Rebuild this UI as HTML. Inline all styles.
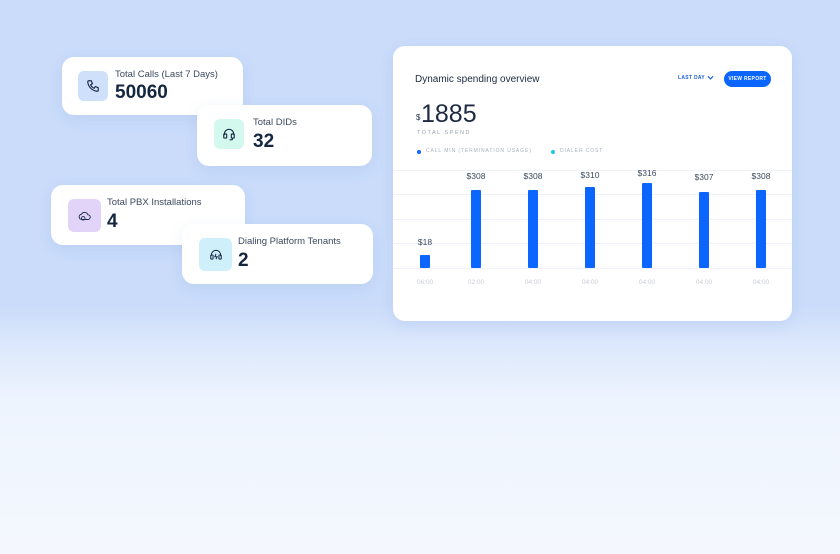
<!DOCTYPE html><html><head><style>
body{margin:0;width:840px;height:554px;overflow:hidden;font-family:"Liberation Sans",sans-serif;background:linear-gradient(#cadcfa 0,#cadcfa 305px,#dce8fc 345px,#eef4fe 400px,#f4f8fe 554px);position:relative}
.c{position:absolute;background:#fff;border-radius:12px;box-shadow:0 4px 14px rgba(80,120,200,.12)}
.ic{position:absolute;width:30px;height:30px;border-radius:6px;display:flex;align-items:center;justify-content:center}
.t{position:absolute;font-size:9.5px;color:#3b4a5e}
.v{position:absolute;font-size:19px;font-weight:bold;color:#142640}
.bar{position:absolute;width:10px;background:#0a66ff;border-radius:1px}
.lb{position:absolute;font-size:8.5px;color:#3b4a5e;width:40px;text-align:center}
.ax{position:absolute;font-size:6.5px;color:#c8ccd4;width:40px;text-align:center;top:279px}
.g{position:absolute;left:393px;width:399px;height:1px;background:#eef2f8}
</style></head><body>
<div class="c" style="left:62px;top:57px;width:181px;height:58px"></div>
<div class="ic" style="left:78px;top:71px;background:#cfe0fb"><svg width="14" height="14" viewBox="0 0 24 24" fill="none" stroke="#1b2e4a" stroke-width="2"><path d="M5 3h4l2 5-3 2a11 11 0 0 0 6 6l2-3 5 2v4a2 2 0 0 1-2 2A18 18 0 0 1 3 5a2 2 0 0 1 2-2z"/></svg></div>
<div class="t" style="left:115px;top:69px">Total Calls (Last 7 Days)</div>
<div class="v" style="left:115px;top:82px">50060</div>

<div class="c" style="left:197px;top:105px;width:175px;height:61px"></div>
<div class="ic" style="left:214px;top:119px;background:#d3f8ee"><svg width="14" height="14" viewBox="0 0 24 24" fill="none" stroke="#1b2e4a" stroke-width="2"><path d="M4 14v-2a8 8 0 0 1 16 0v2"/><rect x="3" y="12" width="5" height="7" rx="1"/><rect x="16" y="12" width="5" height="7" rx="1"/><path d="M18 19v1a2 2 0 0 1-2 2h-3"/></svg></div>
<div class="t" style="left:253px;top:117px">Total DIDs</div>
<div class="v" style="left:253px;top:131px">32</div>

<div class="c" style="left:51px;top:185px;width:194px;height:60px"></div>
<div class="ic" style="left:68px;top:199px;width:33px;height:33px;background:#e2d4f8"><svg width="14" height="14" viewBox="0 0 24 24" fill="none" stroke="#1b2e4a" stroke-width="1.6"><path d="M7 18h10a4 4 0 0 0 0-8 6 6 0 0 0-11-1 4.5 4.5 0 0 0 1 9z"/><circle cx="9" cy="16" r="3"/></svg></div>
<div class="t" style="left:107px;top:197px">Total PBX Installations</div>
<div class="v" style="left:107px;top:211px">4</div>

<div class="c" style="left:182px;top:224px;width:191px;height:60px"></div>
<div class="ic" style="left:199px;top:238px;width:33px;height:33px;background:#cff0fb"><svg width="14" height="14" viewBox="0 0 24 24" fill="none" stroke="#1b2e4a" stroke-width="1.8"><path d="M4 14v-2a8 8 0 0 1 16 0v2"/><rect x="3" y="12" width="4" height="7" rx="1"/><rect x="17" y="12" width="4" height="7" rx="1"/><path d="M12 10l-2 5h4l-2 4"/></svg></div>
<div class="t" style="left:238px;top:236px">Dialing Platform Tenants</div>
<div class="v" style="left:238px;top:250px">2</div>

<div class="c" style="left:393px;top:46px;width:399px;height:275px"></div>
<div style="position:absolute;left:415px;top:74px;font-size:10px;color:#1b2a40">Dynamic spending overview</div>
<div style="position:absolute;left:678px;top:75px;font-size:5px;color:#1e5fd6;letter-spacing:.3px;font-weight:bold">LAST DAY</div>
<svg style="position:absolute;left:707px;top:75px" width="7" height="6" viewBox="0 0 8 6"><path d="M1 1l3 3 3-3" stroke="#1e5fd6" stroke-width="1.4" fill="none"/></svg>
<div style="position:absolute;left:724px;top:71px;width:47px;height:16px;border-radius:8px;background:#0a66ff;color:#fff;font-size:5px;font-weight:bold;display:flex;align-items:center;justify-content:center;letter-spacing:.3px">VIEW REPORT</div>
<div style="position:absolute;left:416px;top:113px;font-size:8px;color:#1b2a40">$</div>
<div style="position:absolute;left:421px;top:100px;font-size:25px;color:#1b2a40">1885</div>
<div style="position:absolute;left:417px;top:130px;font-size:5.5px;color:#9aa3b0;letter-spacing:1.5px">TOTAL SPEND</div>
<div style="position:absolute;left:417px;top:150px;width:4px;height:4px;border-radius:50%;background:#0a66ff"></div>
<div style="position:absolute;left:426px;top:148px;font-size:5px;color:#a8b0bc;letter-spacing:.9px;white-space:nowrap">CALL MIN (TERMINATION USAGE)</div>
<div style="position:absolute;left:551px;top:150px;width:4px;height:4px;border-radius:50%;background:#1ec8e0"></div>
<div style="position:absolute;left:560px;top:148px;font-size:5px;color:#a8b0bc;letter-spacing:.9px">DIALER COST</div>
<div class="g" style="top:170px"></div><div class="g" style="top:194px"></div><div class="g" style="top:219px"></div><div class="g" style="top:243px"></div><div class="g" style="top:268px"></div>
<div class="bar" style="left:420px;top:255px;height:13px"></div><div class="lb" style="left:405px;top:237px">$18</div>
<div class="bar" style="left:471px;top:190px;height:78px"></div><div class="lb" style="left:456px;top:171px">$308</div>
<div class="bar" style="left:528px;top:190px;height:78px"></div><div class="lb" style="left:513px;top:171px">$308</div>
<div class="bar" style="left:585px;top:187px;height:81px"></div><div class="lb" style="left:570px;top:170px">$310</div>
<div class="bar" style="left:642px;top:183px;height:85px"></div><div class="lb" style="left:627px;top:168px">$316</div>
<div class="bar" style="left:699px;top:192px;height:76px"></div><div class="lb" style="left:684px;top:172px">$307</div>
<div class="bar" style="left:756px;top:190px;height:78px"></div><div class="lb" style="left:741px;top:171px">$308</div>
<div class="ax" style="left:405px">06:00</div><div class="ax" style="left:456px">02:00</div><div class="ax" style="left:513px">04:00</div><div class="ax" style="left:570px">04:00</div><div class="ax" style="left:627px">04:00</div><div class="ax" style="left:684px">04:00</div><div class="ax" style="left:741px">04:00</div>
</body></html>
